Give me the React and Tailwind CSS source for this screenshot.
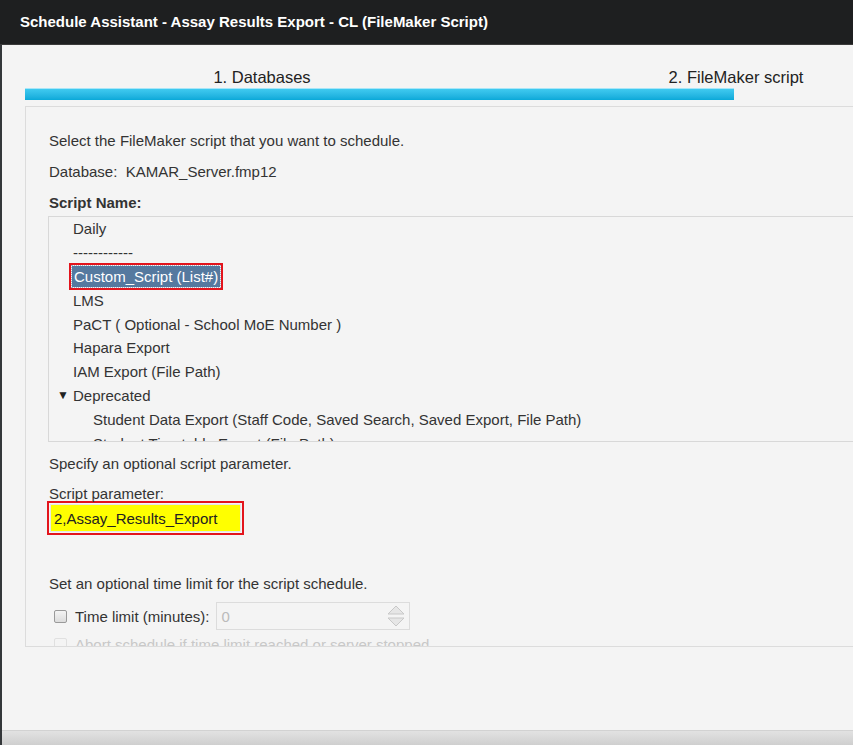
export default function App() {
  const items = [
    { label: 'Daily' },
    { label: '------------' },
    { label: 'Custom_Script (List#)', selected: true },
    { label: 'LMS' },
    { label: 'PaCT ( Optional - School MoE Number )' },
    { label: 'Hapara Export' },
    { label: 'IAM Export (File Path)' },
    { label: 'Deprecated', folder: true },
    { label: 'Student Data Export (Staff Code, Saved Search, Saved Export, File Path)', child: true },
    { label: 'Student Timetable Export (File Path)', child: true },
  ]

  return (
    <div className="w-[853px] h-[745px] overflow-hidden bg-[#f4f4f4] flex flex-col font-['Liberation_Sans',Arial,sans-serif] text-[#333]">
      {/* title bar */}
      <div className="h-[45px] shrink-0 bg-[#1e1f20] border-b border-[#3a3a3a] flex items-center pl-[20px]">
        <span className="text-white font-bold text-[15px]">Schedule Assistant - Assay Results Export - CL (FileMaker Script)</span>
      </div>

      <div className="flex-1 flex border-l-2 border-[#34373a] min-h-0">
        <div className="flex-1 flex flex-col min-h-0">
          <div className="flex-1 pl-[23px] min-h-0">
            <div className="w-[948px]">
              {/* steps */}
              <div className="grid grid-cols-2 text-center text-[16.5px] leading-[20px] mt-[22px] text-[#222]">
                <div>1. Databases</div>
                <div>2. FileMaker script</div>
              </div>
              <div className="mt-[1px] h-[12px] w-[709px] bg-gradient-to-b from-[#3fcaf0] to-[#08a9d9] border-t border-[#a7e6f8]" />

              {/* panel */}
              <div className="mt-[6px] h-[541px] border border-[#dcdcdc] overflow-hidden pl-[23px] text-[15px] leading-[17px]">
                <div className="pt-[25px]">Select the FileMaker script that you want to schedule.</div>
                <div className="mt-[14px]">Database:&nbsp; KAMAR_Server.fmp12</div>
                <div className="mt-[14px] font-bold">Script Name:</div>

                <div className="mt-[5px] -ml-[1px] h-[226px] border border-[#d8d8d8] overflow-hidden">
                  {items.map((it) => (
                    <div
                      key={it.label}
                      className={`h-[23.8px] flex items-center whitespace-nowrap ${it.child ? 'pl-[44px]' : it.folder ? 'pl-[8px]' : 'pl-[24px]'}`}
                    >
                      {it.folder && <span className="text-[12px] w-[16px] text-[#222]">▼</span>}
                      {it.selected ? (
                        <span className="border-2 border-[#e3141c] -ml-[4px] p-[1px]">
                          <span className="bg-[#55799f] text-white px-[2px] py-[2px] block leading-[17px] outline outline-1 outline-dotted outline-[#9db4cc]">{it.label}</span>
                        </span>
                      ) : (
                        <span>{it.label}</span>
                      )}
                    </div>
                  ))}
                </div>

                <div className="mt-[13px]">Specify an optional script parameter.</div>
                <div className="mt-[13px]">Script parameter:</div>
                <div className="-mt-[1px] -ml-[2px] w-[197px] h-[34px] border-2 border-[#e3141c] p-[1px]">
                  <div className="h-full bg-[#ffff00] border border-[#e6e6e6] flex items-center pl-[3px] text-[#222]">2,Assay_Results_Export</div>
                </div>

                <div className="mt-[40px]">Set an optional time limit for the script schedule.</div>
                <div className="mt-[10px] flex items-center">
                  <div className="w-[13px] h-[13px] ml-[5px] border border-[#9a9a9a] rounded-[2px] bg-gradient-to-b from-[#f4f4f4] to-[#dcdcdc]" />
                  <span className="ml-[8px]">Time limit (minutes):</span>
                  <div className="ml-[7px] w-[194px] h-[28px] border border-[#dcdcdc] flex items-center justify-between pl-[4px] pr-[3px]">
                    <span className="text-[#bbb]">0</span>
                    <svg width="20" height="26" viewBox="0 0 20 26">
                      <path d="M2 11 L10 3 L18 11 Z" fill="#e6e6e6" stroke="#c8c8c8" strokeWidth="1" />
                      <path d="M2 15 L10 23 L18 15 Z" fill="#e6e6e6" stroke="#c8c8c8" strokeWidth="1" />
                    </svg>
                  </div>
                </div>
                <div className="mt-[6px] flex items-center text-[#c8c8c8]">
                  <div className="w-[13px] h-[13px] ml-[5px] border border-[#e0e0e0] rounded-[2px]" />
                  <span className="ml-[8px]">Abort schedule if time limit reached or server stopped</span>
                </div>
              </div>
            </div>
          </div>

          {/* bottom bar */}
          <div className="h-[15px] shrink-0 border-t border-[#d2d2d2] bg-gradient-to-b from-[#e2e2e2] to-[#cfcfcf]" />
        </div>
      </div>
    </div>
  )
}
